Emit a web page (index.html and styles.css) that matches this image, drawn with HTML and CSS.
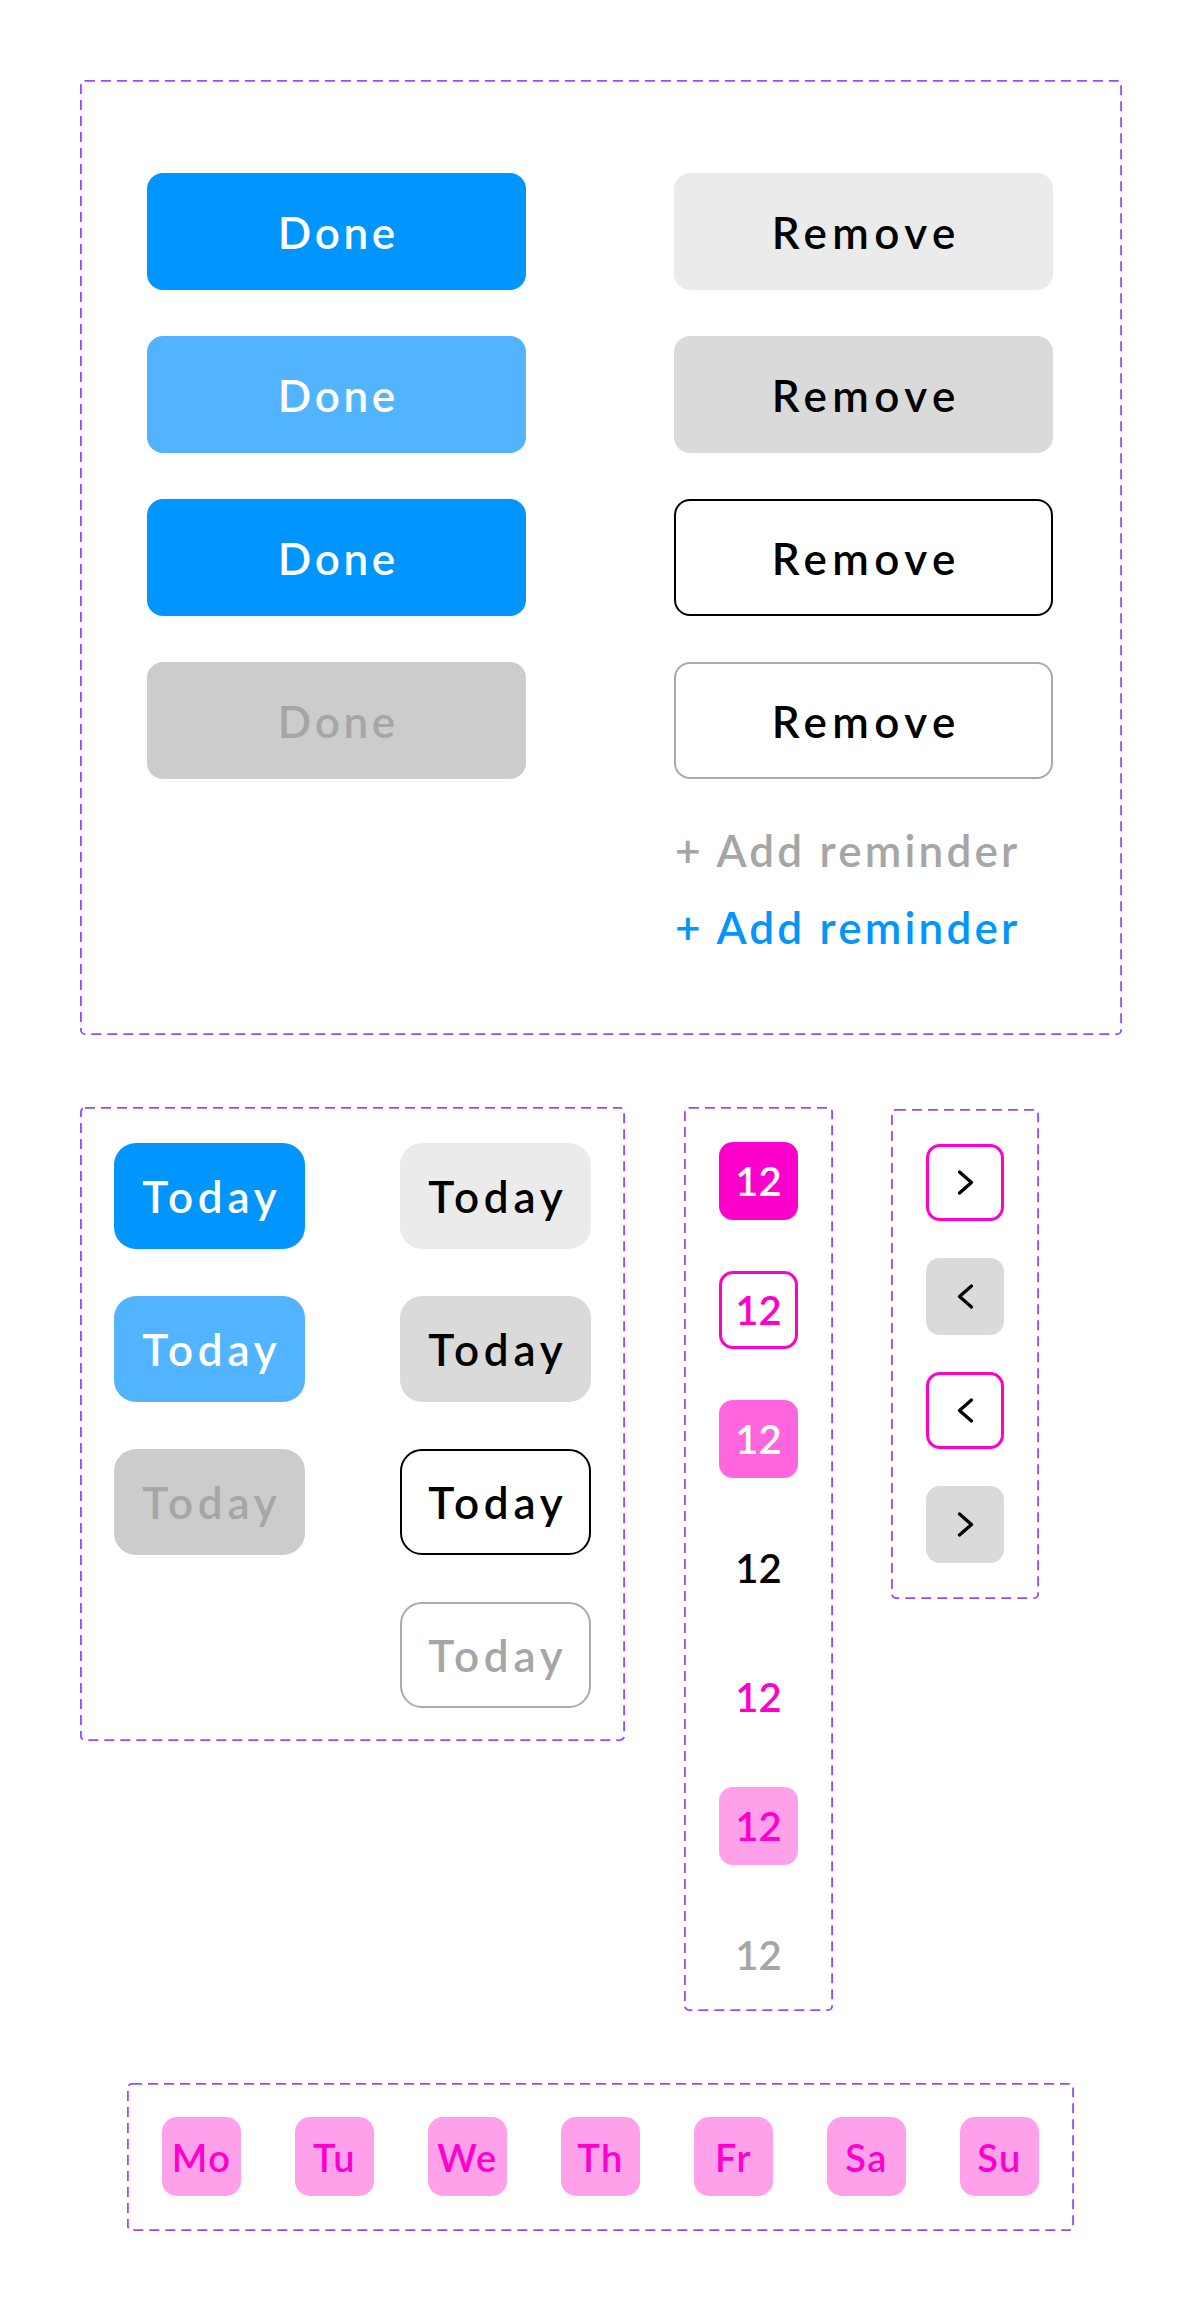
FILE: index.html
```html
<!DOCTYPE html>
<html lang="en">
<head>
<meta charset="utf-8">
<title>Buttons</title>
<link rel="stylesheet" href="styles.css">
</head>
<body>
<main class="sheet">
  <section class="set set-main">
    <div class="col">
      <button class="btn btn-wide btn-done primary">Done</button>
      <button class="btn btn-wide btn-done primary-hover">Done</button>
      <button class="btn btn-wide btn-done primary">Done</button>
      <button class="btn btn-wide btn-done disabled">Done</button>
    </div>
    <div class="col">
      <button class="btn btn-wide btn-remove secondary">Remove</button>
      <button class="btn btn-wide btn-remove secondary-hover">Remove</button>
      <button class="btn btn-wide btn-remove outline-dark">Remove</button>
      <button class="btn btn-wide btn-remove outline-gray">Remove</button>
      <div class="links">
        <a class="link link-muted">+ Add reminder</a>
        <a class="link link-blue">+ Add reminder</a>
      </div>
    </div>
  </section>

  <div class="row">
    <section class="set set-today">
      <div class="col col-today">
        <button class="btn btn-today primary">Today</button>
        <button class="btn btn-today primary-hover">Today</button>
        <button class="btn btn-today disabled">Today</button>
      </div>
      <div class="col col-today">
        <button class="btn btn-today secondary">Today</button>
        <button class="btn btn-today secondary-hover">Today</button>
        <button class="btn btn-today outline-dark">Today</button>
        <button class="btn btn-today outline-gray muted-text">Today</button>
      </div>
    </section>

    <section class="set set-dates">
      <span class="date date-solid">12</span>
      <span class="date date-outline">12</span>
      <span class="date date-mid">12</span>
      <span class="date date-plain">12</span>
      <span class="date date-pink">12</span>
      <span class="date date-light">12</span>
      <span class="date date-gray">12</span>
    </section>

    <section class="set set-arrows">
      <button class="arrow arrow-outline" aria-label="Next">
        <svg class="chev" viewBox="0 0 19 27" width="19" height="27"><path d="M3.5 3 L15.5 13.5 L3.5 24"/></svg>
      </button>
      <button class="arrow arrow-gray" aria-label="Previous">
        <svg class="chev" viewBox="0 0 19 27" width="19" height="27"><path d="M15.5 3 L3.5 13.5 L15.5 24"/></svg>
      </button>
      <button class="arrow arrow-outline" aria-label="Previous">
        <svg class="chev" viewBox="0 0 19 27" width="19" height="27"><path d="M15.5 3 L3.5 13.5 L15.5 24"/></svg>
      </button>
      <button class="arrow arrow-gray" aria-label="Next">
        <svg class="chev" viewBox="0 0 19 27" width="19" height="27"><path d="M3.5 3 L15.5 13.5 L3.5 24"/></svg>
      </button>
    </section>
  </div>

  <section class="set set-days">
    <span class="day">Mo</span>
    <span class="day">Tu</span>
    <span class="day">We</span>
    <span class="day">Th</span>
    <span class="day">Fr</span>
    <span class="day">Sa</span>
    <span class="day">Su</span>
  </section>
</main>
</body>
</html>
```

FILE: styles.css
```css
* {
  box-sizing: border-box;
}

html, body {
  margin: 0;
  padding: 0;
  background: #ffffff;
}

body {
  font-family: "Lato", "Noto Sans", "Liberation Sans", sans-serif;
  font-weight: 600;
  color: #000000;
}

.sheet {
  padding: 80px 0 0 80px;
  width: 1200px;
}

/* Figma-like dashed component-set frame */
.set {
  border-radius: 5px;
  background-image: url("data:image/svg+xml,%3csvg xmlns='http://www.w3.org/2000/svg'%3e%3crect width='100%25' height='100%25' fill='none' rx='5' ry='5' stroke='%239747FF' stroke-width='3.6' stroke-dasharray='10%2c 6' stroke-linecap='butt'/%3e%3c/svg%3e");
}

/* ---------- main set ---------- */
.set-main {
  width: 1042px;
  height: 955px;
  padding: 93px 67px 0 67px;
  display: grid;
  grid-template-columns: 379px 379px;
  column-gap: 148px;
  align-items: start;
}

.col {
  display: flex;
  flex-direction: column;
  gap: 46px;
}

.btn {
  font: inherit;
  margin: 0;
  border: none;
  display: flex;
  align-items: center;
  justify-content: center;
  cursor: pointer;
}

.btn-wide {
  width: 379px;
  height: 117px;
  border-radius: 16px;
  font-size: 44px;
}

.btn-done {
  letter-spacing: 3.7px;
  text-indent: 3.7px;
}

.btn-remove {
  letter-spacing: 5.4px;
  text-indent: 5.4px;
}

.primary {
  background: #0095ff;
  color: #ffffff;
}

.primary-hover {
  background: #52b4ff;
  color: #ffffff;
}

.disabled {
  background: #cccccc;
  color: #a6a6a6;
}

.secondary {
  background: #ebebeb;
  color: #000000;
}

.secondary-hover {
  background: #dadada;
  color: #000000;
}

.outline-dark {
  background: #ffffff;
  border: 2.5px solid #000000;
  color: #000000;
}

.outline-gray {
  background: #ffffff;
  border: 2.5px solid #aaaaaa;
  color: #000000;
}

.muted-text {
  color: #a6a6a6;
}

.links {
  display: flex;
  flex-direction: column;
  gap: 27px;
}

.link {
  display: block;
  height: 50px;
  line-height: 50px;
  font-size: 44px;
  letter-spacing: 3.2px;
  padding-left: 1px;
  white-space: nowrap;
}

.link-muted {
  color: #a6a6a6;
}

.link-blue {
  color: #0095ff;
}

/* ---------- second row ---------- */
.row {
  display: flex;
  align-items: flex-start;
  margin-top: 72px;
}

.set-today {
  width: 545px;
  height: 634px;
  padding: 36px 34px 0 34px;
  display: grid;
  grid-template-columns: 191px 191px;
  column-gap: 95px;
  align-items: start;
}

.col-today {
  gap: 47px;
}

.btn-today {
  width: 191px;
  height: 106px;
  border-radius: 22px;
  font-size: 44px;
  letter-spacing: 4.8px;
  text-indent: 4.8px;
}

.set-dates {
  width: 149px;
  height: 904px;
  margin-left: 59px;
  padding: 35px 0 0 35px;
  display: flex;
  flex-direction: column;
  gap: 51px;
}

.date {
  width: 79px;
  height: 78px;
  border-radius: 14px;
  display: flex;
  align-items: center;
  justify-content: center;
  font-size: 40px;
  line-height: 1;
}

.date-solid {
  background: #ff00cc;
  color: #ffffff;
}

.date-outline {
  border: 3px solid #ff00cc;
  color: #ff00cc;
}

.date-mid {
  background: #ff66dd;
  color: #ffffff;
}

.date-plain {
  color: #000000;
}

.date-pink {
  color: #ff00cc;
}

.date-light {
  background: #ffa0ea;
  color: #ff00cc;
}

.date-gray {
  color: #a6a6a6;
}

.set-arrows {
  width: 148px;
  height: 490px;
  margin-left: 58px;
  margin-top: 2px;
  padding: 35px 0 0 35px;
  display: flex;
  flex-direction: column;
  gap: 37px;
}

.arrow {
  margin: 0;
  padding: 0;
  width: 78px;
  height: 77px;
  border-radius: 14px;
  border: none;
  display: flex;
  align-items: center;
  justify-content: center;
  cursor: pointer;
}

.arrow-outline {
  background: #ffffff;
  border: 3px solid #ff00cc;
}

.arrow-gray {
  background: #dadada;
}

.chev {
  display: block;
}

.chev path {
  fill: none;
  stroke: #000000;
  stroke-width: 3.3;
  stroke-linecap: round;
  stroke-linejoin: round;
}

/* ---------- days ---------- */
.set-days {
  width: 947px;
  height: 148px;
  margin-top: 72px;
  margin-left: 47px;
  padding: 34px 34px 0 35px;
  display: flex;
  gap: 54px;
}

.day {
  width: 79px;
  height: 79px;
  border-radius: 15px;
  background: #ffa0ea;
  color: #ff00cc;
  display: flex;
  align-items: center;
  justify-content: center;
  font-size: 38px;
  letter-spacing: 1.5px;
}
```
